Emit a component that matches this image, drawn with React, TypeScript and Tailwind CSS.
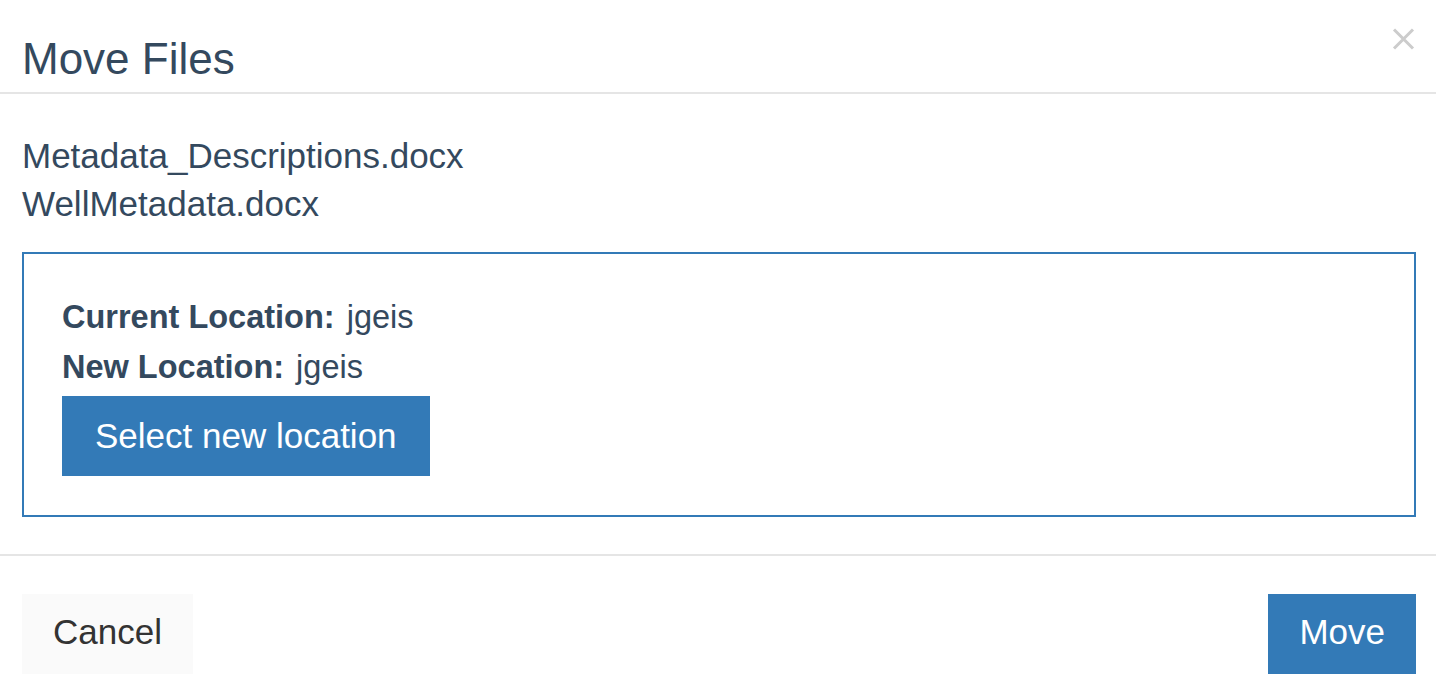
import React from 'react';

const files = ['Metadata_Descriptions.docx', 'WellMetadata.docx'];

const App: React.FC = () => {
  return (
    <div className="w-[1436px] h-[694px] bg-white text-[#34495e] font-['Liberation_Sans',Arial,sans-serif] overflow-hidden">
      <div className="flex justify-between h-[94px] border-b-2 border-[#e5e5e5] pl-[22px] pr-[21px]">
        <h4 className="pt-[37px] text-[44px] leading-[44px] font-normal">Move Files</h4>
        <button className="mt-[28px] w-[23px] h-[22px] text-[#cccccc]" aria-label="Close">
          <svg viewBox="0 0 23 22" width="23" height="22">
            <path d="M2 1.5L21 20.5M21 1.5L2 20.5" stroke="currentColor" strokeWidth="3" strokeLinecap="butt" fill="none" />
          </svg>
        </button>
      </div>

      <div className="pl-[22px] pr-[20px] pt-[38px] pb-[37px] border-b-2 border-[#e5e5e5]">
        {files.map((file) => (
          <div key={file} className="text-[35px] leading-[48px]">
            {file}
          </div>
        ))}
        <div className="mt-[24px] h-[265px] border-2 border-[#337ab7] pt-[38px] pl-[38px] pb-[39px]">
          <div className="text-[32.5px] leading-[50px]">
            <span className="font-bold mr-[3px]">Current Location:</span> jgeis
          </div>
          <div className="text-[32.5px] leading-[50px]">
            <span className="font-bold mr-[3px]">New Location:</span> jgeis
          </div>
          <button className="mt-[4px] h-[80px] px-[33px] bg-[#337ab7] text-white text-[35px]">
            Select new location
          </button>
        </div>
      </div>

      <div className="flex justify-between pl-[22px] pr-[20px] pt-[38px]">
        <button className="h-[80px] px-[31px] bg-[#fafafa] text-[#333333] text-[35px] pb-[3px]">Cancel</button>
        <button className="h-[80px] px-[31px] bg-[#337ab7] text-white text-[35px] pb-[3px]">Move</button>
      </div>
    </div>
  );
};

export default App;
